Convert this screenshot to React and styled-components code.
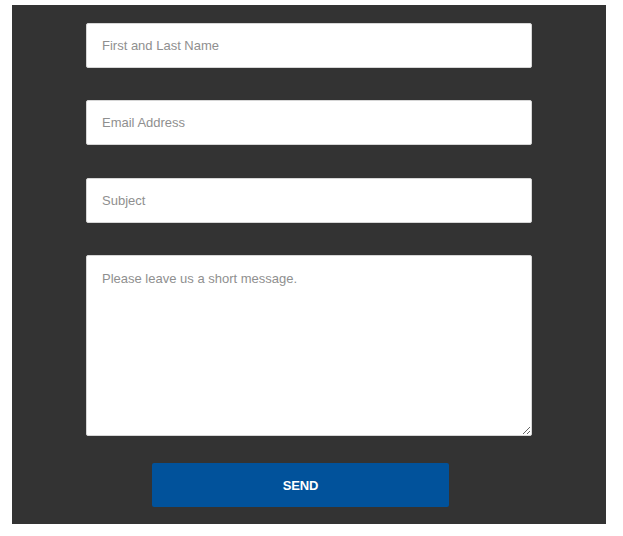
import React from 'react';
import styled, { createGlobalStyle } from 'styled-components';

const GlobalStyle = createGlobalStyle`
  html, body {
    margin: 0;
    padding: 0;
    background: #fff;
  }
`;

const Page = styled.div`
  padding: 5px 17px 12px 12px;
`;

const Panel = styled.form`
  width: 594px;
  box-sizing: border-box;
  background: #333333;
  padding: 18px 0 17px;
  display: flex;
  flex-direction: column;
  font-family: 'Helvetica Neue', Helvetica, 'Liberation Sans', Arial, sans-serif;
`;

const Field = styled.input`
  display: block;
  width: 446px;
  height: 45px;
  box-sizing: border-box;
  margin: 0 0 ${p => p.$gap}px 74px;
  padding: 0 15px;
  border: 1px solid #d6d6d6;
  border-radius: 2px;
  background: #fff;
  font-family: inherit;
  font-size: 13px;
  color: #333;
  outline: none;

  &::placeholder {
    color: #8f8f8f;
  }
`;

const Message = styled.textarea`
  display: block;
  width: 446px;
  height: 181px;
  box-sizing: border-box;
  margin: 0 0 27px 74px;
  padding: 15px 15px;
  border: 1px solid #d6d6d6;
  border-radius: 2px;
  background: #fff;
  font-family: inherit;
  font-size: 13px;
  line-height: 16px;
  color: #333;
  outline: none;
  resize: vertical;

  &::placeholder {
    color: #8f8f8f;
  }
`;

const SendButton = styled.button`
  width: 297px;
  height: 44px;
  margin-left: 140px;
  border: none;
  border-radius: 2px;
  background: #01529b;
  color: #fff;
  font-family: inherit;
  font-size: 13px;
  font-weight: bold;
  letter-spacing: -0.2px;
  cursor: pointer;
`;

export default function App() {
  return (
    <>
      <GlobalStyle />
      <Page>
        <Panel onSubmit={e => e.preventDefault()}>
          <Field type="text" placeholder="First and Last Name" $gap={32} />
          <Field type="email" placeholder="Email Address" $gap={33} />
          <Field type="text" placeholder="Subject" $gap={32} />
          <Message placeholder="Please leave us a short message." />
          <SendButton type="submit">SEND</SendButton>
        </Panel>
      </Page>
    </>
  );
}
